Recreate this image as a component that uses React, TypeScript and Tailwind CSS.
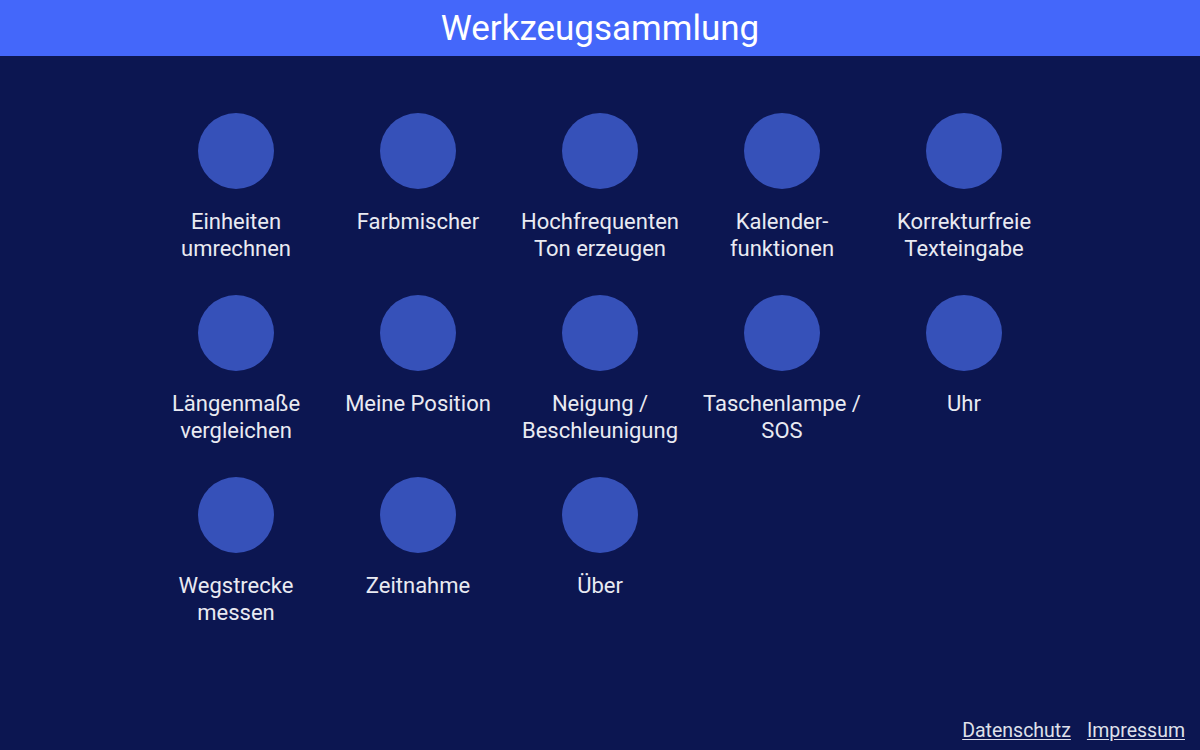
const tools: string[][] = [
  ['Einheiten', 'umrechnen'],
  ['Farbmischer'],
  ['Hochfrequenten', 'Ton erzeugen'],
  ['Kalender-', 'funktionen'],
  ['Korrekturfreie', 'Texteingabe'],
  ['Längenmaße', 'vergleichen'],
  ['Meine Position'],
  ['Neigung /', 'Beschleunigung'],
  ['Taschenlampe /', 'SOS'],
  ['Uhr'],
  ['Wegstrecke', 'messen'],
  ['Zeitnahme'],
  ['Über'],
]

function ToolTile({ lines }: { lines: string[] }) {
  return (
    <a href="#" className="flex h-[182px] flex-col items-center">
      <div className="h-[76px] w-[76px] rounded-full bg-[#3651b9]" />
      <div className="mt-[20px] text-center text-[22px] leading-[26.5px] text-[#e9eaf2]">
        {lines.map((l) => (
          <div key={l} className="whitespace-nowrap">
            {l}
          </div>
        ))}
      </div>
    </a>
  )
}

export default function App() {
  return (
    <div
      className="flex h-[750px] w-full flex-col bg-[#0c1651]"
      style={{ fontFamily: 'Roboto, "Noto Sans", sans-serif' }}
    >
      <header className="flex h-[56px] shrink-0 items-center justify-center bg-[#4467fa]">
        <h1 className="text-[35px] leading-none text-white">Werkzeugsammlung</h1>
      </header>

      <main className="flex flex-1 justify-center pt-[57px]">
        <div className="grid w-[910px] grid-cols-5 content-start">
          {tools.map((t) => (
            <ToolTile key={t.join(' ')} lines={t} />
          ))}
        </div>
      </main>

      <footer className="flex justify-end gap-[16px] px-[15px] pb-[7px] text-[19.5px] leading-[24px] text-[#dfe0ea]">
        <a href="#" className="underline underline-offset-2">Datenschutz</a>
        <a href="#" className="underline underline-offset-2">Impressum</a>
      </footer>
    </div>
  )
}
